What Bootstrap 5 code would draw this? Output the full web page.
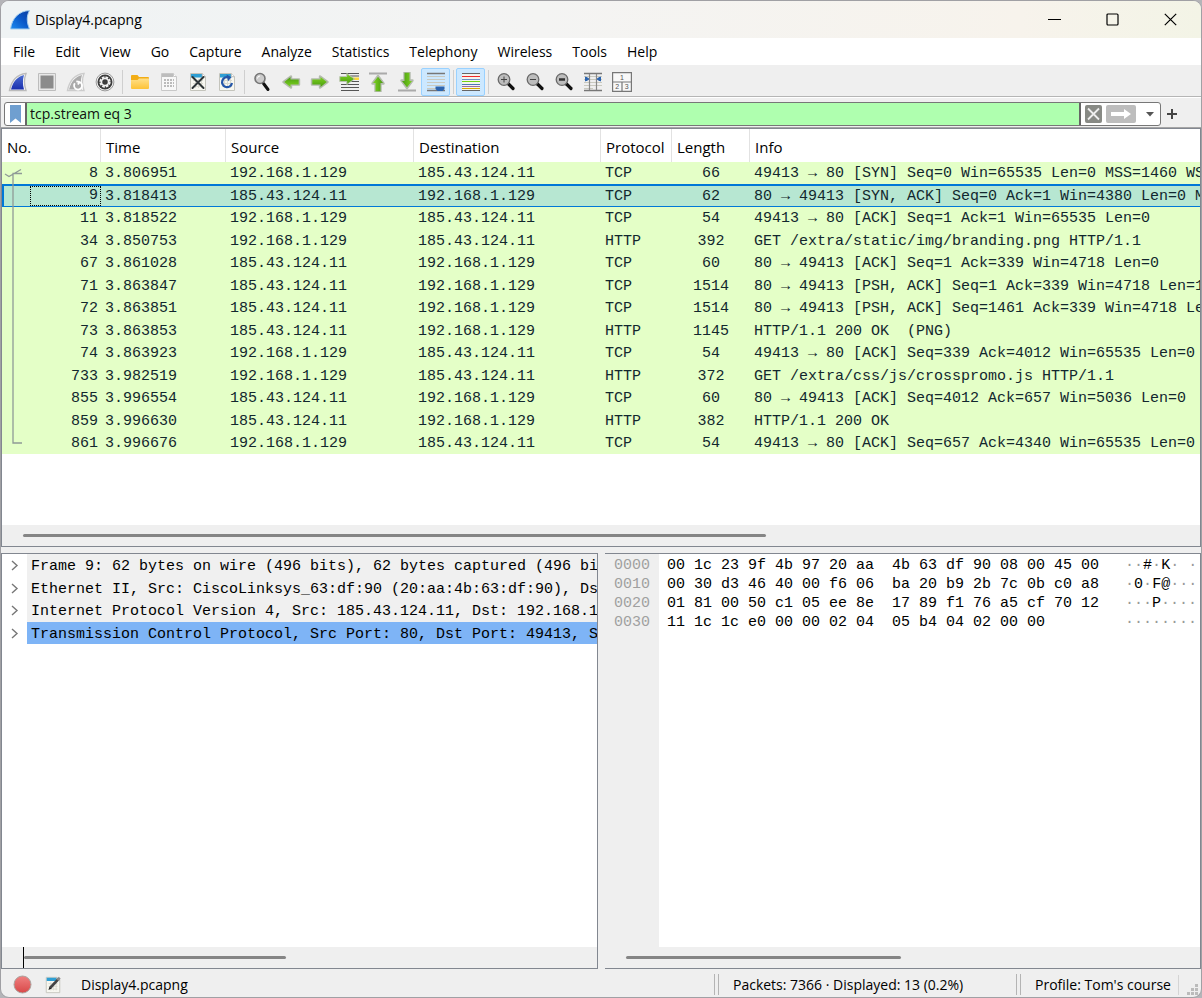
<!DOCTYPE html>
<html lang="en">
<head>
<meta charset="utf-8">
<meta name="viewport" content="width=device-width, initial-scale=1">
<title>Display4.pcapng</title>
<link href="https://cdn.jsdelivr.net/npm/bootstrap@5.3.0/dist/css/bootstrap.min.css" rel="stylesheet">
<style>
:root { --ui: "Open Sans", "Noto Sans", sans-serif; --mono: "Liberation Mono", monospace; --line: #828790; --chrome: #efefef; }
html { background: #b4b4b8; }
body { background: transparent; font: 14px/20px var(--ui); color: #000; }
button { color: inherit; }
.app { border: 1px solid #a0a0a4; border-radius: 9px; background: var(--chrome); min-height: 560px; }
.titlebar { height: 37px; padding: 0 2px 0 8px; background: linear-gradient(90deg, #eff3f4, #f4f4f3 45%, #f7f3ec 85%, #f3f4e6); }
.titlebar h1 { font-size: 14px; font-weight: 400; line-height: 20px; }
.winbtn { width: 58px; height: 37px; }
.plain { border: 0; background: none; padding: 0; display: flex; align-items: center; justify-content: center; }
.menubar { height: 27px; padding-left: 2px; }
.menubar .nav-link { color: #000; padding: 4px 10px 3px; line-height: 20px; }
.tools { height: 32px; padding: 2px 0 0 2px; border-bottom: 1px solid #b5b5b5; }
.tool { width: 29px; height: 28px; border: 1px solid transparent; border-radius: 2px; }
.tool.active { background: #cce8ff; border-color: #99d1ff; }
.tool svg { width: 20px; height: 20px; }
.divider { width: 6px; height: 24px; display: flex; justify-content: center; }
.divider::before { content: ""; width: 1px; background: #cfcfcf; }
.filterrow { height: 31px; padding: 2px 0 0 3px; border-top: 1px solid #fff; border-bottom: 1px solid #a5a5a5; }
.filterbox { height: 24px; border: 1px solid #777; border-radius: 3px; background: #fff; }
.filterbox .form-control { background: #afffaf; border: solid #666; border-width: 0 2px; border-radius: 0; padding: 0 3px; font-size: 14px; line-height: 20px; height: 22px; min-height: 0; color: #111; box-shadow: none; }
.bookmark { width: 22px; }
.addbtn { width: 22px; margin-right: 18px; }
.pane { background: #fff; border: 1px solid var(--line); min-height: 0; min-width: 0; flex: 1 1 0; }
.mono { font-family: var(--mono); font-size: 15px; }
.packets { table-layout: fixed; width: 100%; border-collapse: separate; border-spacing: 0; white-space: nowrap; }
.packets th { height: 33px; font-size: 15px; font-weight: 400; padding: 2px 4px 0 5px; border-right: 1px solid #e2e2e2; }
.packets th:last-child { border-right: 0; }
.packets tbody { font-family: var(--mono); font-size: 15px; color: #12272e; background: #e4ffc7; }
.packets td { height: 22px; line-height: 18px; padding: 1px 4px 0; overflow: hidden; border: solid transparent; border-width: 2px 0 1px; }
.packets tr:nth-child(even) td { height: 23px; }
.packets td:first-child { text-align: right; padding-right: 3px; }
.packets td:nth-child(6) { text-align: center; }
.packets .chosen td { background: #b7e7d2; border-color: #0078d7; }
.packets .chosen td:first-child { padding: 0; border-left: 2px solid #0078d7; }
.packets .chosen span { display: block; height: 20px; margin-left: 26px; padding-right: 2px; border: 1px dotted #000; }
.c-no { width: 99px; } .c-time { width: 125px; } .c-src { width: 188px; } .c-dst { width: 187px; } .c-proto { width: 71px; } .c-len { width: 78px; }
.related { left: 0; top: 33px; }
.hscroll { height: 21px; background: var(--chrome); padding: 0 21px; flex: none; }
.hscroll div { height: 3px; border-radius: 2px; background: #858585; }
.split { height: 6px; flex: none; }
.lower { gap: 7px; flex: 1 1 0; }
.tree button { height: 23px; width: 100%; justify-content: flex-start; white-space: nowrap; }
.tree li:nth-child(even) button { height: 22px; }
.tree svg { width: 25px; flex: none; }
.tree span { background: #f0f0f0; align-self: stretch; padding: 3px 0 0 4px; flex: 1 0 auto; text-align: left; line-height: 19px; }
.tree .picked span { background: #7eb4f6; }
.caret-bar { border-left: 1px solid #000; height: 21px; width: 0; }
.hex { line-height: 19px; white-space: pre; margin-top: 2px; }
.hex th, .hex td { padding: 0; font-weight: 400; vertical-align: top; }
.hex th { width: 54px; padding-left: 9px; color: #a0a0a0; }
.hex td { padding-left: 8px; }
.hex td + td { padding-left: 26px; }
.hex i { color: #999; font-style: normal; }
.hexwrap { background: linear-gradient(90deg, #efefef 54px, #fff 54px); }
.status { height: 28px; flex: none; padding-top: 3px; }
.grip { width: 5px; height: 21px; border: solid #b4b4b4; border-width: 0 1px; flex: none; }
.s-file { margin-left: 19px; }
.s-packets { width: 297px; padding-left: 14px; }
.s-profile { width: 158px; padding-left: 14px; border-right: 1px solid #d4d4d4; white-space: nowrap; }
</style>
</head>
<body class="vh-100 m-0 overflow-hidden">
<svg class="position-absolute" width="0" height="0" aria-hidden="true">
  <defs>
    <linearGradient id="gBlue" x1="0" y1="1" x2="1" y2="0"><stop offset="0" stop-color="#1d8cf0"/><stop offset=".55" stop-color="#0a58c8"/><stop offset="1" stop-color="#0a3ca0"/></linearGradient>
    <linearGradient id="gNavy" x1="0" y1="0" x2="0" y2="1"><stop offset="0" stop-color="#4a6bd0"/><stop offset="1" stop-color="#1a2fae"/></linearGradient>
    <linearGradient id="gFold" x1="0" y1="0" x2="0" y2="1"><stop offset="0" stop-color="#ffe08a"/><stop offset="1" stop-color="#fdc236"/></linearGradient>
    <linearGradient id="gGreen" x1="0" y1="0" x2="0" y2="1"><stop offset="0" stop-color="#7ed321"/><stop offset="1" stop-color="#4a9c10"/></linearGradient>
    <linearGradient id="gRed" x1="0" y1="0" x2="0" y2="1"><stop offset="0" stop-color="#f08080"/><stop offset="1" stop-color="#d84848"/></linearGradient>
    <symbol id="page" viewBox="0 0 20 20"><path d="M2.500 1.500h12l3 3v14h-15z" fill="#f7f7f0" stroke="#c4c4bc"/><path d="M3 2h11.300v3.500H3z" fill="#2f9fd4"/><path d="M14.300 1.500v3.200h3.200" fill="#fff" stroke="#bbb"/><path d="M5 8.500h10M5 11.500h10M5 14.500h10M7.500 7v9M10.500 7v9M13.500 7v9" stroke="#d9d9cf" fill="none"/></symbol>
    <symbol id="lens" viewBox="0 0 20 20"><path d="M12.500 12l4.500 4.500" stroke="#111" stroke-width="3.200" stroke-linecap="round"/><circle cx="8" cy="7.500" r="5.800" fill="#bdbdbd" stroke="#6a6a6a" stroke-width="1.300"/></symbol>
    <symbol id="arrow" viewBox="0 0 20 20"><path d="M2 7.500h8V4.500l7.500 5.500-7.500 5.500v-3H2z" fill="#fff" stroke="#b4bbae" stroke-width="2.400" stroke-linejoin="round"/><path d="M2.300 7.500h8.200V5l6.300 5-6.300 5v-2.500H2.300z" fill="url(#gGreen)"/></symbol>
    <symbol id="rules" viewBox="0 0 20 20"><path d="M1 1.500h18M1 18.500h18" stroke="#777" stroke-width="1.500"/><path d="M1 4.500h18M1 7.500h18M1 10.500h18M1 13.500h18M1 16.500h9" stroke="#c9c9bf"/></symbol>
  </defs>
</svg>
<div class="app h-100 d-flex flex-column overflow-hidden">
  <header class="titlebar d-flex align-items-center flex-shrink-0">
    <svg width="22" height="22" viewBox="0 0 22 22" aria-hidden="true"><path d="M1.500 20C3 9 10 2 20.500 1.500 17.500 7 17.500 13 20.500 20z" fill="url(#gBlue)" stroke="#a8d0ee"/></svg>
    <h1 class="m-0 ms-1 flex-grow-1">Display4.pcapng</h1>
    <button class="plain winbtn" aria-label="Minimize"><svg width="13" height="13"><path d="M0 6.500h13" stroke="#000"/></svg></button>
    <button class="plain winbtn" aria-label="Maximize"><svg width="13" height="13"><rect x="1" y="1" width="11" height="11" rx="1" fill="none" stroke="#000" stroke-width="1.200"/></svg></button>
    <button class="plain winbtn" aria-label="Close"><svg width="13" height="13"><path d="M.8.8l11.400 11.400M12.200.8L.8 12.200" stroke="#000" stroke-width="1.200"/></svg></button>
  </header>
  <nav class="menubar nav flex-nowrap bg-white flex-shrink-0" aria-label="Menu">
    <a class="nav-link" href="#">File</a><a class="nav-link" href="#">Edit</a><a class="nav-link" href="#">View</a><a class="nav-link" href="#">Go</a><a class="nav-link" href="#">Capture</a><a class="nav-link" href="#">Analyze</a><a class="nav-link" href="#">Statistics</a><a class="nav-link" href="#">Telephony</a><a class="nav-link" href="#">Wireless</a><a class="nav-link" href="#">Tools</a><a class="nav-link" href="#">Help</a>
  </nav>
  <div class="tools d-flex align-items-center flex-shrink-0" role="toolbar" aria-label="Main toolbar">
    <button class="plain tool" aria-label="Start capture"><svg viewBox="0 0 20 20"><path d="M1.500 18.500C3.500 8.500 9 2.500 18 1.500c-2 5-2 11 0 17z" fill="#fff" stroke="#bbb" stroke-width="1.400"/><path d="M3 17.500C5 9.500 9.500 4.500 16 3c-1.500 5-1.300 9.500 0 14.500z" fill="url(#gNavy)"/></svg></button>
    <button class="plain tool" aria-label="Stop capture"><svg viewBox="0 0 20 20"><path d="M1.500 1.500h17v17h-17z" fill="#e8e8e8" stroke="#bdbdbd"/><path d="M3.500 3.500h13v13h-13z" fill="#8b8b8b"/></svg></button>
    <button class="plain tool" aria-label="Restart capture"><svg viewBox="0 0 20 20"><path d="M1.500 18.500C3.500 8.500 9 2.500 18 1.500c-2 5-2 11 0 17z" fill="#fff" stroke="#ccc" stroke-width="1.400"/><path d="M3 17.500C5 9.500 9.500 4.500 16 3c-1.500 5-1.300 9.500 0 14.500z" fill="#ababab"/><path d="M13.800 10a4 4 0 1 1-5 1.300M13.800 10l-3.500-.6M13.800 10l-2 2.500" fill="none" stroke="#fff" stroke-width="1.800"/></svg></button>
    <button class="plain tool" aria-label="Capture options"><svg viewBox="0 0 20 20"><circle cx="10" cy="10" r="8.900" fill="#f4f4f4" stroke="#999"/><circle cx="10" cy="10" r="7.500" fill="#3c3c3c"/><circle cx="10" cy="10" r="4.600" fill="none" stroke="#f0f0f0" stroke-width="2.200" stroke-dasharray="2.600 1"/><circle cx="10" cy="10" r="3.500" fill="none" stroke="#f0f0f0" stroke-width="1.500"/></svg></button>
    <span class="divider"></span>
    <button class="plain tool" aria-label="Open file"><svg viewBox="0 0 20 20"><path d="M1 4a1 1 0 0 1 1-1h5.500L9 5h9a1 1 0 0 1 1 1v3H1z" fill="#f2ad16"/><path d="M1 8h6.500L9 6.500h10V16a1 1 0 0 1-1 1H2a1 1 0 0 1-1-1z" fill="url(#gFold)"/></svg></button>
    <button class="plain tool" aria-label="Save file"><svg viewBox="0 0 20 20"><path d="M2.500 1.500h12l3 3v14h-15z" fill="#f8f8f8" stroke="#c8c8c8"/><path d="M3 2h11v3H3z" fill="#bdbdbd"/><path d="M14.500 1.500v3h3" fill="#fff" stroke="#c8c8c8"/><path d="M5 8h10M5 11h10M5 14h10" stroke="#bbb" stroke-dasharray="2 1" stroke-width="1.800"/></svg></button>
    <button class="plain tool" aria-label="Close file"><svg viewBox="0 0 20 20"><use href="#page"/><path d="M4.500 5l11 11M15.500 5l-11 11" stroke="#2e3436" stroke-width="2" stroke-linecap="round"/></svg></button>
    <button class="plain tool" aria-label="Reload file"><svg viewBox="0 0 20 20"><use href="#page"/><path d="M12 5.500A5 5 0 1 0 15 11" fill="none" stroke="#2456a8" stroke-width="2.200"/><path d="M9.500 2.500l5 2.700-3.500 4z" fill="#2456a8"/></svg></button>
    <span class="divider"></span>
    <button class="plain tool" aria-label="Find packet"><svg viewBox="0 0 20 20"><path d="M11.500 11.500l4.500 6" stroke="#111" stroke-width="3" stroke-linecap="round"/><circle cx="8" cy="6.500" r="5" fill="#ccc" stroke="#777" stroke-width="1.600"/><path d="M5.500 6.500a2.500 2.500 0 0 1 2.500-2.500" stroke="#fff" fill="none"/></svg></button>
    <button class="plain tool" aria-label="Previous packet"><svg viewBox="0 0 20 20"><use href="#arrow" transform="rotate(180 10 10)"/></svg></button>
    <button class="plain tool" aria-label="Next packet"><svg viewBox="0 0 20 20"><use href="#arrow"/></svg></button>
    <button class="plain tool" aria-label="Go to packet"><svg viewBox="0 0 20 20"><path d="M2 1.500h18M2 15.500h18M2 18.500h18M2 12.500h18M10 4h10M10 9.500h10" stroke="#555" stroke-width="1.200"/><path d="M13 5.500h7v2.500h-7z" fill="#fcd83c"/><path d="M.8 4.500h7V1.500L15.500 7l-7.700 5.500v-3h-7z" fill="url(#gGreen)" stroke="#b9c4ae"/></svg></button>
    <button class="plain tool" aria-label="First packet"><svg viewBox="0 0 20 20"><path d="M1 1.500h18" stroke="#aaa" stroke-width="2"/><use href="#arrow" transform="translate(0 1.500) rotate(-90 10 10)"/></svg></button>
    <button class="plain tool" aria-label="Last packet"><svg viewBox="0 0 20 20"><path d="M1 18.500h18" stroke="#aaa" stroke-width="2"/><use href="#arrow" transform="translate(0 -1.500) rotate(90 10 10)"/></svg></button>
    <button class="plain tool active" aria-label="Auto scroll"><svg viewBox="0 0 20 20"><use href="#rules"/><path d="M9.500 14.500h9V17l-2 2h-5l-2-2z" fill="#2c64ae"/></svg></button>
    <span class="divider"></span>
    <button class="plain tool active" aria-label="Colorize"><svg viewBox="0 0 20 20"><path d="M1 1h18v18H1z" fill="#f4f4ee"/><path d="M1 1.500h18M1 18.500h18" stroke="#666"/><path d="M1 4.500h18" stroke="#ef2929"/><path d="M1 7.500h18" stroke="#6d8fc4"/><path d="M1 9.500h18" stroke="#73d216"/><path d="M1 12.500h18" stroke="#4d79b4"/><path d="M1 14.500h18" stroke="#9b6aa8"/><path d="M1 16.500h18" stroke="#d4a800"/></svg></button>
    <span class="divider"></span>
    <button class="plain tool" aria-label="Zoom in"><svg viewBox="0 0 20 20"><use href="#lens"/><path d="M5 7.500h6M8 4.500v6" stroke="#444"/></svg></button>
    <button class="plain tool" aria-label="Zoom out"><svg viewBox="0 0 20 20"><use href="#lens"/><path d="M5 7.500h6" stroke="#444"/></svg></button>
    <button class="plain tool" aria-label="Normal size"><svg viewBox="0 0 20 20"><use href="#lens"/><path d="M5 7.500h6" stroke="#333" stroke-width="2.600"/></svg></button>
    <button class="plain tool" aria-label="Resize columns"><svg viewBox="0 0 20 20"><use href="#rules"/><path d="M6.500 2v16M13.500 2v16" stroke="#888" stroke-width="1.200"/><path d="M2.500 5l3 1.500v1l-3 1.500zM17.500 5l-3 1.500v1l3 1.500z" fill="#2c64ae" stroke="#2c64ae"/></svg></button>
    <button class="plain tool" aria-label="Reset layout"><svg viewBox="0 0 20 20"><path d="M.6.600h18.800v18.800H.6zM.6 10h18.800M10 10v9.400" fill="#f8f8f8" stroke="#777" stroke-width="1.200"/><g font-family="Liberation Sans" font-size="7" fill="#555" text-anchor="middle"><text x="10" y="8">1</text><text x="5.300" y="17">2</text><text x="14.800" y="17">3</text></g></svg></button>
  </div>
  <form class="filterrow d-flex align-items-center flex-shrink-0" onsubmit="return false">
    <div class="filterbox d-flex align-items-center flex-grow-1 overflow-hidden">
      <button class="plain bookmark" type="button" aria-label="Bookmark"><svg width="11" height="18"><path d="M0 0h11v18l-5.500-4.500L0 18z" fill="#6f9fd0"/></svg></button>
      <input class="form-control flex-grow-1" type="text" value="tcp.stream eq 3" aria-label="Display filter">
      <button class="plain ms-1" type="button" aria-label="Clear"><svg width="17" height="18"><rect width="17" height="18" rx="2" fill="#888a85"/><path d="M3 3.500l11 11M14 3.500l-11 11" stroke="#eee" stroke-width="1.800"/></svg></button>
      <button class="plain ms-1" type="submit" aria-label="Apply"><svg width="30" height="18"><rect width="30" height="18" rx="2" fill="#bdbdbd"/><path d="M5 7h13V4l7 5-7 5v-3H5z" fill="#fff"/></svg></button>
      <button class="plain ms-1 ps-1 pe-1" type="button" aria-label="Recent filters"><svg width="12" height="18"><path d="M2 7h8l-4 4.500z" fill="#555"/></svg></button>
    </div>
    <button class="plain addbtn" type="button" aria-label="Add filter button"><svg width="10" height="10"><path d="M5 0v10M0 5h10" stroke="#444" stroke-width="2"/></svg></button>
  </form>
  <main class="d-flex flex-column flex-grow-1 overflow-hidden">
    <section class="pane d-flex flex-column">
      <div class="flex-grow-1 overflow-hidden position-relative">
        <table class="packets">
          <colgroup><col class="c-no"><col class="c-time"><col class="c-src"><col class="c-dst"><col class="c-proto"><col class="c-len"><col></colgroup>
          <thead><tr><th>No.</th><th>Time</th><th>Source</th><th>Destination</th><th>Protocol</th><th>Length</th><th>Info</th></tr></thead>
          <tbody>
            <tr><td>8</td><td>3.806951</td><td>192.168.1.129</td><td>185.43.124.11</td><td>TCP</td><td>66</td><td>49413 → 80 [SYN] Seq=0 Win=65535 Len=0 MSS=1460 WS</td></tr>
            <tr class="chosen"><td><span>9</span></td><td>3.818413</td><td>185.43.124.11</td><td>192.168.1.129</td><td>TCP</td><td>62</td><td>80 → 49413 [SYN, ACK] Seq=0 Ack=1 Win=4380 Len=0 M</td></tr>
            <tr><td>11</td><td>3.818522</td><td>192.168.1.129</td><td>185.43.124.11</td><td>TCP</td><td>54</td><td>49413 → 80 [ACK] Seq=1 Ack=1 Win=65535 Len=0</td></tr>
            <tr><td>34</td><td>3.850753</td><td>192.168.1.129</td><td>185.43.124.11</td><td>HTTP</td><td>392</td><td>GET /extra/static/img/branding.png HTTP/1.1</td></tr>
            <tr><td>67</td><td>3.861028</td><td>185.43.124.11</td><td>192.168.1.129</td><td>TCP</td><td>60</td><td>80 → 49413 [ACK] Seq=1 Ack=339 Win=4718 Len=0</td></tr>
            <tr><td>71</td><td>3.863847</td><td>185.43.124.11</td><td>192.168.1.129</td><td>TCP</td><td>1514</td><td>80 → 49413 [PSH, ACK] Seq=1 Ack=339 Win=4718 Len=1</td></tr>
            <tr><td>72</td><td>3.863851</td><td>185.43.124.11</td><td>192.168.1.129</td><td>TCP</td><td>1514</td><td>80 → 49413 [PSH, ACK] Seq=1461 Ack=339 Win=4718 Le</td></tr>
            <tr><td>73</td><td>3.863853</td><td>185.43.124.11</td><td>192.168.1.129</td><td>HTTP</td><td>1145</td><td>HTTP/1.1 200 OK&nbsp; (PNG)</td></tr>
            <tr><td>74</td><td>3.863923</td><td>192.168.1.129</td><td>185.43.124.11</td><td>TCP</td><td>54</td><td>49413 → 80 [ACK] Seq=339 Ack=4012 Win=65535 Len=0</td></tr>
            <tr><td>733</td><td>3.982519</td><td>192.168.1.129</td><td>185.43.124.11</td><td>HTTP</td><td>372</td><td>GET /extra/css/js/crosspromo.js HTTP/1.1</td></tr>
            <tr><td>855</td><td>3.996554</td><td>185.43.124.11</td><td>192.168.1.129</td><td>TCP</td><td>60</td><td>80 → 49413 [ACK] Seq=4012 Ack=657 Win=5036 Len=0</td></tr>
            <tr><td>859</td><td>3.996630</td><td>185.43.124.11</td><td>192.168.1.129</td><td>HTTP</td><td>382</td><td>HTTP/1.1 200 OK</td></tr>
            <tr><td>861</td><td>3.996676</td><td>192.168.1.129</td><td>185.43.124.11</td><td>TCP</td><td>54</td><td>49413 → 80 [ACK] Seq=657 Ack=4340 Win=65535 Len=0</td></tr>
          </tbody>
        </table>
        <svg class="related position-absolute" width="26" height="290" fill="none" stroke="#8f9a97" stroke-width="1.300" aria-hidden="true"><path d="M20 11.500h-9v269.500h9M3 12l4 2.500 12-7"/></svg>
      </div>
      <div class="hscroll d-flex align-items-center"><div style="width:64.300%"></div></div>
    </section>
    <div class="split"></div>
    <div class="lower d-flex overflow-hidden">
      <section class="pane d-flex flex-column overflow-hidden">
        <ul class="tree mono list-unstyled m-0 flex-grow-1 overflow-hidden">
          <li><button class="plain"><svg height="12" fill="none" stroke="#777" stroke-width="1.400"><path d="M10 2l5 4.500-5 4.500"/></svg><span>Frame 9: 62 bytes on wire (496 bits), 62 bytes captured (496 bit</span></button></li>
          <li><button class="plain"><svg height="12" fill="none" stroke="#777" stroke-width="1.400"><path d="M10 2l5 4.500-5 4.500"/></svg><span>Ethernet II, Src: CiscoLinksys_63:df:90 (20:aa:4b:63:df:90), Dst</span></button></li>
          <li><button class="plain"><svg height="12" fill="none" stroke="#777" stroke-width="1.400"><path d="M10 2l5 4.500-5 4.500"/></svg><span>Internet Protocol Version 4, Src: 185.43.124.11, Dst: 192.168.1</span></button></li>
          <li class="picked"><button class="plain"><svg height="12" fill="none" stroke="#777" stroke-width="1.400"><path d="M10 2l5 4.500-5 4.500"/></svg><span>Transmission Control Protocol, Src Port: 80, Dst Port: 49413, Se</span></button></li>
        </ul>
        <div class="hscroll d-flex align-items-center"><span class="caret-bar"></span><div style="width:47.300%"></div></div>
      </section>
      <section class="pane d-flex flex-column overflow-hidden border-start-0">
        <div class="hexwrap flex-grow-1 overflow-hidden">
          <table class="hex mono">
            <tr><th scope="row">0000</th><td>00 1c 23 9f 4b 97 20 aa  4b 63 df 90 08 00 45 00</td><td><i>··</i>#<i>·</i>K<i>· ·</i></td></tr>
            <tr><th scope="row">0010</th><td>00 30 d3 46 40 00 f6 06  ba 20 b9 2b 7c 0b c0 a8</td><td><i>·</i>0<i>·</i>F@<i>···</i></td></tr>
            <tr><th scope="row">0020</th><td>01 81 00 50 c1 05 ee 8e  17 89 f1 76 a5 cf 70 12</td><td><i>···</i>P<i>····</i></td></tr>
            <tr><th scope="row">0030</th><td>11 1c 1c e0 00 00 02 04  05 b4 04 02 00 00</td><td><i>········</i></td></tr>
          </table>
        </div>
        <div class="hscroll d-flex align-items-center"><div style="width:49.700%"></div></div>
      </section>
    </div>
  </main>
  <footer class="status d-flex align-items-center">
    <button class="plain ms-2 ps-1" aria-label="Expert info"><svg width="19" height="19"><circle cx="9.500" cy="9.500" r="8.500" fill="url(#gRed)" stroke="#aaa39f"/></svg></button>
    <button class="plain ms-2 ps-1" aria-label="Capture comment"><svg width="18" height="18" viewBox="0 0 20 20"><use href="#page"/><path d="M7 13L16 3.500" stroke="#444" stroke-width="3"/><path d="M5 15.500l1-3.500 2.500 2z" fill="#222"/><path d="M15 4.500l2.500-2.500" stroke="#888" stroke-width="3"/></svg></button>
    <span class="s-file flex-grow-1">Display4.pcapng</span>
    <span class="grip"></span>
    <span class="s-packets">Packets: 7366 · Displayed: 13 (0.2%)</span>
    <span class="grip"></span>
    <span class="s-profile">Profile: Tom's course</span>
    <svg class="align-self-end" width="22" height="14" fill="#bbb" aria-hidden="true"><path d="M16 1h3v3h-3zM12 5h3v3h-3zM16 5h3v3h-3zM8 9h3v3H8zM12 9h3v3h-3zM16 9h3v3h-3z"/></svg>
  </footer>
</div>
<script src="https://cdn.jsdelivr.net/npm/bootstrap@5.3.0/dist/js/bootstrap.bundle.min.js"></script>
</body>
</html>
